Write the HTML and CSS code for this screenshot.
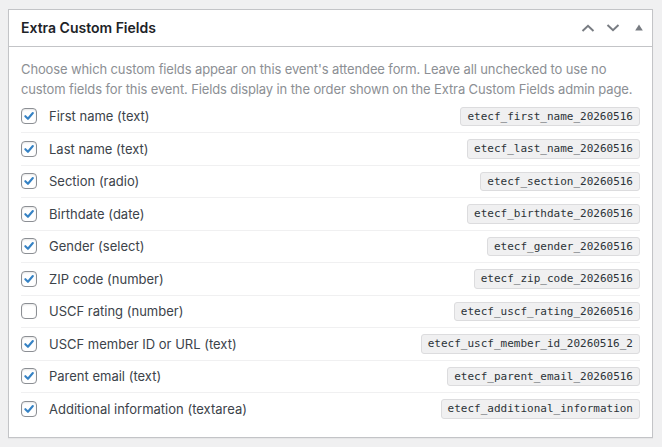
FILE: index.html
```html
<!DOCTYPE html>
<html lang="en">
<head>
    <meta charset="UTF-8">
    <meta name="viewport" content="width=device-width, initial-scale=1.0">
    <title>Extra Custom Fields</title>
    <link rel="stylesheet" href="styles.css">
</head>
<body>
    <div class="postbox">
        <div class="postbox-header">
            <h2 class="hndle">Extra Custom Fields</h2>
            <div class="handle-actions">
                <button class="handle-btn" type="button" aria-label="Move up">
                    <svg width="14" height="8" viewBox="0 0 14 8"><polyline points="1.5,7 7,1.8 12.5,7" /></svg>
                </button>
                <button class="handle-btn" type="button" aria-label="Move down">
                    <svg width="14" height="8" viewBox="0 0 14 8"><polyline points="1.5,1 7,6.2 12.5,1" /></svg>
                </button>
                <button class="handle-btn toggle" type="button" aria-label="Toggle panel">
                    <svg width="8" height="7" viewBox="0 0 8 7"><polygon points="4,0.5 7.8,6.5 0.2,6.5" /></svg>
                </button>
            </div>
        </div>

        <div class="inside">
            <p class="description">Choose which custom fields appear on this event's attendee form. Leave all unchecked to use no custom fields for this event. Fields display in the order shown on the Extra Custom Fields admin page.</p>

            <ul class="field-list">
                <li class="field-row">
                    <label><span class="check is-checked"><svg viewBox="0 0 16 16"><polyline points="3.8,8.2 6.8,11.2 12.4,4.6" /></svg></span>First name (text)</label>
                    <code>etecf_first_name_20260516</code>
                </li>
                <li class="field-row">
                    <label><span class="check is-checked"><svg viewBox="0 0 16 16"><polyline points="3.8,8.2 6.8,11.2 12.4,4.6" /></svg></span>Last name (text)</label>
                    <code>etecf_last_name_20260516</code>
                </li>
                <li class="field-row">
                    <label><span class="check is-checked"><svg viewBox="0 0 16 16"><polyline points="3.8,8.2 6.8,11.2 12.4,4.6" /></svg></span>Section (radio)</label>
                    <code>etecf_section_20260516</code>
                </li>
                <li class="field-row">
                    <label><span class="check is-checked"><svg viewBox="0 0 16 16"><polyline points="3.8,8.2 6.8,11.2 12.4,4.6" /></svg></span>Birthdate (date)</label>
                    <code>etecf_birthdate_20260516</code>
                </li>
                <li class="field-row">
                    <label><span class="check is-checked"><svg viewBox="0 0 16 16"><polyline points="3.8,8.2 6.8,11.2 12.4,4.6" /></svg></span>Gender (select)</label>
                    <code>etecf_gender_20260516</code>
                </li>
                <li class="field-row">
                    <label><span class="check is-checked"><svg viewBox="0 0 16 16"><polyline points="3.8,8.2 6.8,11.2 12.4,4.6" /></svg></span>ZIP code (number)</label>
                    <code>etecf_zip_code_20260516</code>
                </li>
                <li class="field-row">
                    <label><span class="check"></span>USCF rating (number)</label>
                    <code>etecf_uscf_rating_20260516</code>
                </li>
                <li class="field-row">
                    <label><span class="check is-checked"><svg viewBox="0 0 16 16"><polyline points="3.8,8.2 6.8,11.2 12.4,4.6" /></svg></span>USCF member ID or URL (text)</label>
                    <code>etecf_uscf_member_id_20260516_2</code>
                </li>
                <li class="field-row">
                    <label><span class="check is-checked"><svg viewBox="0 0 16 16"><polyline points="3.8,8.2 6.8,11.2 12.4,4.6" /></svg></span>Parent email (text)</label>
                    <code>etecf_parent_email_20260516</code>
                </li>
                <li class="field-row">
                    <label><span class="check is-checked"><svg viewBox="0 0 16 16"><polyline points="3.8,8.2 6.8,11.2 12.4,4.6" /></svg></span>Additional information (textarea)</label>
                    <code>etecf_additional_information</code>
                </li>
            </ul>
        </div>
    </div>
</body>
</html>
```

FILE: styles.css
```css
body {
    margin: 0;
    padding: 9px 9px 9px 8px;
    background-color: #f0f0f1;
    font-family: Inter, "Liberation Sans", sans-serif;
    font-size: 13px;
    color: #3c434a;
}
.postbox {
    background-color: #fff;
    border: 1px solid #c3c4c7;
    box-shadow: 0 1px 1px rgba(0, 0, 0, 0.04);
}
.postbox-header {
    display: flex;
    align-items: center;
    justify-content: space-between;
    border-bottom: 1px solid #c3c4c7;
}
.hndle {
    margin: 0;
    padding: 8px 12px;
    font-size: 14px;
    line-height: 1.4;
    font-weight: 600;
    color: #1d2327;
}
.handle-actions {
    display: flex;
    align-self: stretch;
}
.handle-btn {
    width: 25px;
    padding: 0;
    border: none;
    background: none;
    display: flex;
    align-items: center;
    justify-content: center;
    cursor: pointer;
}
.handle-btn polyline {
    fill: none;
    stroke: #787c82;
    stroke-width: 2;
}
.handle-btn.toggle {
    width: 27px;
}
.handle-btn polygon {
    fill: #787c82;
}
.inside {
    padding: 12px;
}
.description {
    margin: 0 0 2px;
    line-height: 20px;
    letter-spacing: -0.12px;
    color: #8c8f94;
}
.field-list {
    list-style: none;
    margin: 0;
    padding: 0;
}
.field-row {
    display: flex;
    align-items: center;
    justify-content: space-between;
    padding: 6px 0;
    border-bottom: 1px solid #f0f0f1;
}
.field-row:last-child {
    border-bottom: none;
}
.field-row label {
    display: flex;
    align-items: center;
    gap: 12px;
    cursor: pointer;
}
.check {
    width: 14px;
    height: 14px;
    border: 1px solid #8c8f94;
    border-radius: 4px;
    background-color: #fff;
    box-shadow: inset 0 1px 2px rgba(0, 0, 0, 0.1);
    flex-shrink: 0;
}
.check svg {
    display: block;
    width: 14px;
    height: 14px;
}
.check polyline {
    fill: none;
    stroke: #3582c4;
    stroke-width: 2.4;
    stroke-linecap: round;
    stroke-linejoin: round;
}
code {
    font-family: "DejaVu Sans Mono", "Liberation Mono", monospace;
    font-size: 11px;
    line-height: 16.5px;
    padding: 1px 6px 0;
    background-color: #f0f0f1;
    border: 1px solid #dcdcde;
    border-radius: 3px;
    color: #2c3338;
}
```
